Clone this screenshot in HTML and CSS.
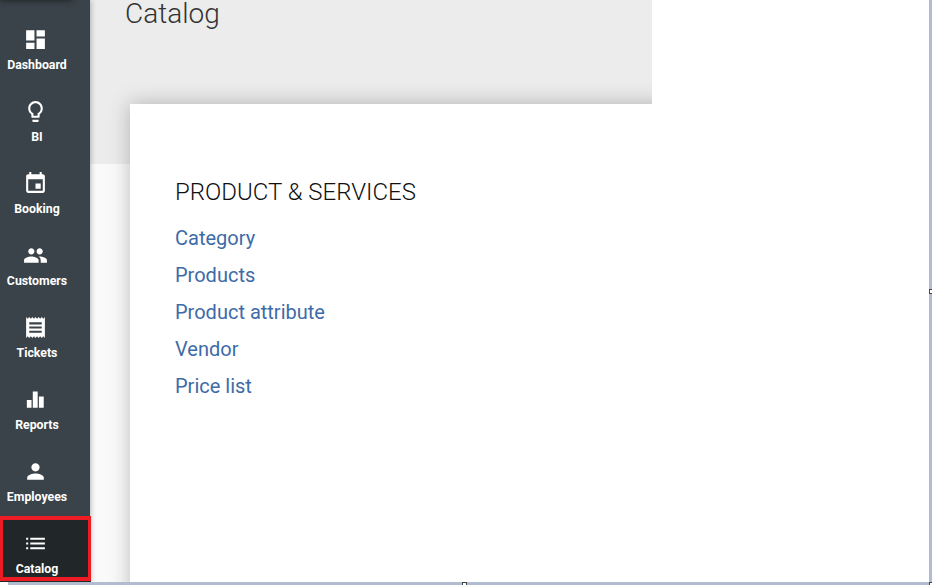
FILE: index.html
```html
<!DOCTYPE html>
<html lang="en">
<head>
	<meta charset="UTF-8">
	<title>Catalog</title>
	<link rel="stylesheet" href="styles.css">
</head>
<body>
	<div class="window">
		<div class="panel">
			<nav class="sidebar">
				<div class="logo-edge"></div>
				<a class="item">
					<svg class="icon" viewBox="0 0 24 24"><path d="M3 13h8V3H3v10zm0 8h8v-6H3v6zm10 0h8V11h-8v10zm0-18v6h8V3h-8z"/></svg>
					<span>Dashboard</span>
				</a>
				<a class="item">
					<svg class="icon" viewBox="0 0 24 24"><path d="M9 21c0 .55.45 1 1 1h4c.55 0 1-.45 1-1v-1H9v1zm3-19C8.14 2 5 5.14 5 9c0 2.38 1.19 4.47 3 5.74V17c0 .55.45 1 1 1h6c.55 0 1-.45 1-1v-2.26c1.81-1.27 3-3.36 3-5.74 0-3.86-3.14-7-7-7zm2.85 11.1l-.85.6V16h-4v-2.3l-.85-.6C7.8 12.16 7 10.63 7 9c0-2.76 2.24-5 5-5s5 2.24 5 5c0 1.63-.8 3.16-2.15 4.1z"/></svg>
					<span>BI</span>
				</a>
				<a class="item">
					<svg class="icon" viewBox="0 0 24 24"><path d="M17 12h-5v5h5v-5zM16 1v2H8V1H6v2H5c-1.11 0-1.99.9-1.99 2L3 19c0 1.1.89 2 2 2h14c1.1 0 2-.9 2-2V5c0-1.1-.9-2-2-2h-1V1h-2zm3 18H5V8h14v11z"/></svg>
					<span>Booking</span>
				</a>
				<a class="item">
					<svg class="icon" viewBox="0 0 24 24"><path d="M16 11c1.66 0 2.99-1.34 2.99-3S17.66 5 16 5c-1.66 0-3 1.34-3 3s1.34 3 3 3zm-8 0c1.66 0 2.99-1.34 2.99-3S9.66 5 8 5C6.34 5 5 6.34 5 8s1.34 3 3 3zm0 2c-2.33 0-7 1.17-7 3.5V19h14v-2.5c0-2.33-4.67-3.5-7-3.5zm8 0c-.29 0-.62.02-.97.05 1.16.84 1.97 1.97 1.97 3.45V19h6v-2.5c0-2.33-4.67-3.5-7-3.5z"/></svg>
					<span>Customers</span>
				</a>
				<a class="item">
					<svg class="icon" viewBox="0 0 24 24"><path d="M18 17H6v-2h12v2zm0-4H6v-2h12v2zm0-4H6V7h12v2zM3 22l1.5-1.5L6 22l1.5-1.5L9 22l1.5-1.5L12 22l1.5-1.5L15 22l1.5-1.5L18 22l1.5-1.5L21 22V2l-1.5 1.5L18 2l-1.5 1.5L15 2l-1.5 1.5L12 2l-1.5 1.5L9 2 7.5 3.5 6 2 4.5 3.5 3 2v20z"/></svg>
					<span>Tickets</span>
				</a>
				<a class="item">
					<svg class="icon" viewBox="0 0 24 24"><path d="M3.7 12.5h4.5v7.3H3.7zM9.4 4.2h4.7v15.6H9.4zM15.3 9.2h4.6v10.6h-4.6z"/></svg>
					<span>Reports</span>
				</a>
				<a class="item">
					<svg class="icon" viewBox="0 0 24 24"><path d="M12 12c2.21 0 4-1.79 4-4s-1.79-4-4-4-4 1.79-4 4 1.79 4 4 4zm0 2c-2.67 0-8 1.34-8 4v2h16v-2c0-2.66-5.33-4-8-4z"/></svg>
					<span>Employees</span>
				</a>
				<a class="item active">
					<svg class="icon" viewBox="0 0 24 24"><path d="M3 13h2v-2H3v2zm0 4.6h2v-2H3v2zm0-9.2h2v-2H3v2zm4 4.6h14v-2H7v2zm0 4.6h14v-2H7v2zM7 6.4v2h14v-2H7z"/></svg>
					<span>Catalog</span>
				</a>
			</nav>
			<main class="main">
				<header class="banner">
					<h1>Catalog</h1>
				</header>
				<section class="card">
					<h2>PRODUCT &amp; SERVICES</h2>
					<ul class="links">
						<li><a>Category</a></li>
						<li><a>Products</a></li>
						<li><a>Product attribute</a></li>
						<li><a>Vendor</a></li>
						<li><a>Price list</a></li>
					</ul>
				</section>
			</main>
		</div>
		<div class="bottom-edge"></div>
	</div>
	<i class="handle handle-side"></i>
	<i class="handle handle-bottom"></i>
	<i class="handle handle-corner"></i>
</body>
</html>
```

FILE: styles.css
```css
*{
	margin: 0;
	padding: 0;
	box-sizing: border-box;
}
html, body{
	width: 932px;
	height: 585px;
	overflow: hidden;
	background: #fff;
}
body{
	position: relative;
	font-family: Roboto, "Liberation Sans", sans-serif;
}
.window{
	display: flex;
	flex-direction: column;
	height: 585px;
}
.panel{
	display: flex;
	height: 582px;
	width: 932px;
	border-right: 3px solid #b1bcd0;
	background: #fff;
}
.bottom-edge{
	height: 3px;
	margin-left: 8px;
	background: #b1bcd0;
}

/* sidebar */
.sidebar{
	position: relative;
	z-index: 2;
	flex: 0 0 90px;
	display: flex;
	flex-direction: column;
	gap: 6px;
	padding-top: 12px;
	background: #3a4349;
	box-shadow: 0 0 6px rgba(0,0,0,.35);
	clip-path: inset(0 -10px 0 0);
}
.logo-edge{
	position: absolute;
	top: -10px;
	left: 0;
	width: 72px;
	height: 10px;
	box-shadow: 0 0 6px rgba(0,0,0,.6);
}
.item{
	display: flex;
	flex-direction: column;
	align-items: center;
	flex: 0 0 66px;
	padding: 15px 16px 0 0;
	color: #fff;
	font-size: 12.3px;
	font-weight: 700;
	line-height: 16px;
}
.item .icon{
	width: 25px;
	height: 25px;
	margin: 0 4px 5px 0;
	fill: #fff;
}
.item.active{
	flex-basis: 64px;
	margin-right: -1px;
	padding: 11px 17px 0 0;
	background: #212729;
	border: 4px solid #ed1c24;
	border-left-width: 3px;
	border-right-width: 3px;
	box-shadow: 0 2px 0 #212729;
}

/* content */
.main{
	flex: 0 0 562px;
	overflow: hidden;
	background: #fafafa;
}
.banner{
	height: 164px;
	padding: 0 35px;
	background: #ececec;
}
.banner h1{
	font-size: 28px;
	font-weight: 300;
	line-height: 28px;
	color: #333;
}
.card{
	width: 640px;
	height: 500px;
	margin: -60px 0 0 40px;
	padding: 72px 45px 0;
	background: #fff;
	box-shadow: 0 0 20px rgba(0,0,0,.25);
}
.card h2{
	font-size: 24px;
	font-weight: 300;
	line-height: 32px;
	color: #111;
}
.links{
	list-style: none;
	margin-top: 12px;
}
.links li{
	font-size: 20px;
	line-height: 37px;
	color: #3e6ba8;
}

/* resize handles */
.handle{
	position: absolute;
	width: 5px;
	height: 5px;
	background: #fff;
	border: 1px solid #444;
}
.handle-side{
	left: 929px;
	top: 289px;
}
.handle-bottom{
	left: 462px;
	top: 582px;
}
.handle-corner{
	left: 929px;
	top: 582px;
}
```
